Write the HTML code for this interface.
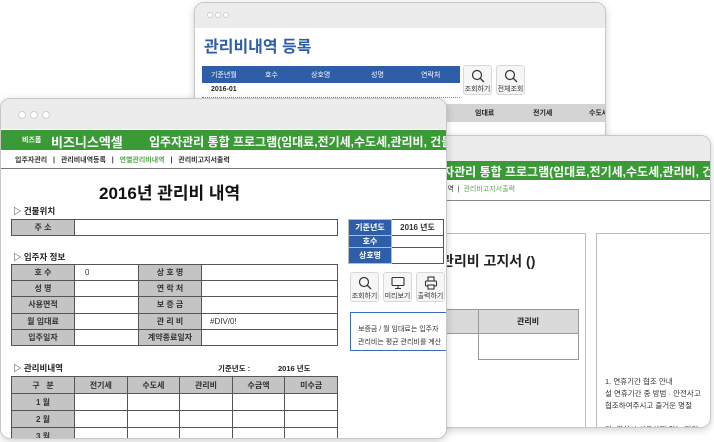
<!DOCTYPE html>
<html><head><meta charset="utf-8"><style>
*{margin:0;padding:0;box-sizing:border-box}
body{width:714px;height:442px;background:#fff;position:relative;overflow:hidden;font-family:"Liberation Sans","Noto Sans CJK KR",sans-serif;color:#222}
.a{position:absolute}
.win{position:absolute;background:#fff;border:1px solid #c8c8c8;border-radius:10px;overflow:hidden;box-shadow:0 2px 8px rgba(0,0,0,.18)}
.tb{position:absolute;left:0;right:0;top:0;background:#ececec}
.dot{position:absolute;width:8px;height:8px;border-radius:50%;background:#fff;border:1px solid #d0d0d0}
.green{position:absolute;background:#3a9a35;color:#fff;font-weight:bold;white-space:nowrap}
.t{position:absolute;white-space:nowrap}
table{border-collapse:collapse;position:absolute;font-size:8px;font-weight:bold}
td{border:1px solid #555;text-align:center;color:#333;padding:0}
td.g{background:#c4c4c4}
td.b{background:#2f5ea8;color:#fff;border-color:#bbb}
.btn{position:absolute;width:29px;height:30px;border:1px solid #d8d8d8;border-radius:3px;background:#f6f6f6;font-size:7px;text-align:center;color:#333}
.btn svg{display:block;margin:3px auto 1px}
</style></head><body>

<!-- back window -->
<div class="win" style="left:194px;top:2px;width:412px;height:140px">
 <div class="tb" style="height:25px"></div>
 <div class="dot" style="left:12px;top:9px;width:6px;height:6px"></div>
 <div class="dot" style="left:20px;top:9px;width:6px;height:6px"></div>
 <div class="dot" style="left:28px;top:9px;width:6px;height:6px"></div>
 <div class="t" style="left:9px;top:30px;font-size:16px;font-weight:bold;color:#2f5ea8">관리비내역 등록</div>
 <div class="a" style="left:7px;top:63px;width:258px;height:17px;background:#2f5ea8"></div>
 <div class="t" style="left:16px;top:67px;font-size:7px;color:#fff">기준년월</div>
 <div class="t" style="left:70px;top:67px;font-size:7px;color:#fff">호수</div>
 <div class="t" style="left:116px;top:67px;font-size:7px;color:#fff">상호명</div>
 <div class="t" style="left:176px;top:67px;font-size:7px;color:#fff">성명</div>
 <div class="t" style="left:226px;top:67px;font-size:7px;color:#fff">연락처</div>
 <div class="t" style="left:16px;top:83px;font-size:7px;font-weight:bold">2016-01</div>
 <div class="a" style="left:7px;top:94px;width:258px;border-top:1px dotted #888"></div>
 <div class="btn" style="left:268px;top:62px"><svg width="14" height="14" viewBox="0 0 14 14"><circle cx="6" cy="6" r="4.5" fill="none" stroke="#333" stroke-width="1.2"/><path d="M9.3 9.3L13 13" stroke="#333" stroke-width="1.3"/></svg>조회하기</div>
 <div class="btn" style="left:301px;top:62px"><svg width="14" height="14" viewBox="0 0 14 14"><circle cx="6" cy="6" r="4.5" fill="none" stroke="#333" stroke-width="1.2"/><path d="M9.3 9.3L13 13" stroke="#333" stroke-width="1.3"/></svg>전체조회</div>
 <div class="a" style="left:250px;top:101px;width:162px;height:18px;background:#d4d4d4"></div>
 <div class="t" style="left:280px;top:105px;font-size:7px;font-weight:bold">임대료</div>
 <div class="t" style="left:338px;top:105px;font-size:7px;font-weight:bold">전기세</div>
 <div class="t" style="left:394px;top:105px;font-size:7px;font-weight:bold">수도세</div>
</div>

<!-- third window -->
<div class="win" style="left:380px;top:135px;width:331px;height:293px">
 <div class="tb" style="height:25px"></div>
 <div class="green" style="left:0;right:0;top:25px;height:19px;font-size:12px;padding:2px 0 0 0;"><span style="position:absolute;left:40px;top:2px">입주자관리 통합 프로그램(임대료,전기세,수도세,관리비, 건물관리)</span></div>
 <div class="t" style="left:60px;top:48px;font-size:7px;color:#333">내역 &nbsp;|&nbsp; <span style="color:#5aa850">관리비고지서출력</span></div>
 <div class="a" style="left:0;right:0;top:64px;border-top:1px solid #888"></div>
 <div class="a" style="left:55px;top:97px;width:150px;height:195px;border:1px solid #bbb"></div>
 <div class="a" style="left:215px;top:97px;width:120px;height:195px;border:1px solid #bbb"></div>
 <div class="t" style="left:60px;top:115px;font-size:14px;font-weight:bold">관리비 고지서 ()</div>
 <div class="a" style="left:60px;top:173px;width:138px;height:25px;background:#dadada;border:1px solid #999"></div>
 <div class="a" style="left:97px;top:173px;width:101px;height:51px;border:1px solid #999"></div>
 <div class="t" style="left:136px;top:180px;font-size:8px;font-weight:bold">관리비</div>
 <div class="t" style="left:50px;top:265px;font-size:8px">11월</div>
 <div class="t" style="left:224px;top:240px;font-size:7.5px;line-height:12px;color:#333">1. 연휴기간 협조 안내<br>설 연휴기간 중 방범 · 안전사고<br>협조하여주시고 즐거운 명절<br><br>가. 퇴실시 사용하지 않는 전기</div>
</div>

<!-- front window -->
<div class="win" style="left:0;top:98px;width:447px;height:341px">
 <div class="tb" style="height:30px"></div>
 <div class="dot" style="left:17px;top:12px"></div>
 <div class="dot" style="left:29px;top:12px"></div>
 <div class="dot" style="left:41px;top:12px"></div>
 <div class="green" style="left:0;right:0;top:31px;height:20px">
  <span style="position:absolute;left:21px;top:5px;font-size:7px">비즈폼</span>
  <span style="position:absolute;left:50px;top:2px;font-size:13px">비즈니스엑셀</span>
  <span style="position:absolute;left:148px;top:3px;font-size:12px">입주자관리 통합 프로그램(임대료,전기세,수도세,관리비, 건물관리)</span>
 </div>
 <div class="t" style="left:14px;top:56px;font-size:7px;font-weight:bold;color:#333">입주자관리 &nbsp;&nbsp;|&nbsp;&nbsp; 관리비내역등록 &nbsp;&nbsp;|&nbsp;&nbsp; <span style="color:#5aa850">연별관리비내역</span> &nbsp;&nbsp;|&nbsp;&nbsp; 관리비고지서출력</div>
 <div class="a" style="left:0;right:0;top:69px;border-top:1px solid #777"></div>
 <div class="t" style="left:98px;top:80px;font-size:17px;font-weight:bold;color:#111">2016년 관리비 내역</div>
 <div class="t" style="left:12px;top:106px;font-size:8.5px;font-weight:bold">▷ 건물위치</div>
 <table style="left:10px;top:120px;width:327px;height:17px"><tr><td class="g" style="width:63px">주 소</td><td></td></tr></table>
 <table style="left:347px;top:120px;width:96px"><tr style="height:16px"><td class="b" style="width:43px">기준년도</td><td>2016 년도</td></tr><tr style="height:12px"><td class="b">호수</td><td></td></tr><tr style="height:16px"><td class="b">상호명</td><td></td></tr></table>
 <div class="t" style="left:12px;top:152px;font-size:8.5px;font-weight:bold">▷ 입주자 정보</div>
 <table style="left:10px;top:165px;width:327px;height:82px">
  <tr><td class="g" style="width:63px">호 수</td><td style="width:64px;text-align:left;padding-left:10px;font-weight:normal">0</td><td class="g" style="width:63px">상 호 명</td><td></td></tr>
  <tr><td class="g">성 명</td><td></td><td class="g">연 락 처</td><td></td></tr>
  <tr><td class="g">사용면적</td><td></td><td class="g">보 증 금</td><td></td></tr>
  <tr><td class="g">월 임대료</td><td></td><td class="g">관 리 비</td><td style="text-align:left;padding-left:8px;font-weight:normal">#DIV/0!</td></tr>
  <tr><td class="g">입주일자</td><td></td><td class="g">계약종료일자</td><td></td></tr>
 </table>
 <div class="btn" style="left:349px;top:173px"><svg width="14" height="14" viewBox="0 0 14 14"><circle cx="6" cy="6" r="4.5" fill="none" stroke="#333" stroke-width="1.2"/><path d="M9.3 9.3L13 13" stroke="#333" stroke-width="1.3"/></svg>조회하기</div>
 <div class="btn" style="left:382px;top:173px"><svg width="14" height="14" viewBox="0 0 14 14"><rect x="1" y="1.5" width="12" height="8" rx="1" fill="none" stroke="#333" stroke-width="1.1"/><path d="M7 9.5V12M4 12.5h6" stroke="#333" stroke-width="1.1"/></svg>미리보기</div>
 <div class="btn" style="left:415px;top:173px"><svg width="14" height="14" viewBox="0 0 14 14"><rect x="4" y="1" width="6" height="4" fill="none" stroke="#333" stroke-width="1.1"/><rect x="1.5" y="5" width="11" height="5" rx="1" fill="none" stroke="#333" stroke-width="1.1"/><rect x="4" y="9" width="6" height="4" fill="#fff" stroke="#333" stroke-width="1.1"/></svg>출력하기</div>
 <div class="a" style="left:349px;top:213px;width:110px;height:39px;border:1px solid #3a6cc0"></div>
 <div class="t" style="left:357px;top:224px;font-size:7px;line-height:13px;color:#333">보증금 / 월 임대료는 입주자<br>관리비는 평균 관리비를 계산</div>
 <div class="t" style="left:12px;top:263px;font-size:8.5px;font-weight:bold">▷ 관리비내역</div>
 <div class="t" style="left:217px;top:264px;font-size:7.5px;font-weight:bold">기준년도 :</div>
 <div class="t" style="left:277px;top:264px;font-size:7.5px;font-weight:bold">2016 년도</div>
 <table style="left:10px;top:277px;width:327px">
  <tr style="height:17px"><td class="g" style="width:63px">구 &nbsp; 분</td><td class="g">전기세</td><td class="g">수도세</td><td class="g">관리비</td><td class="g">수금액</td><td class="g">미수금</td></tr>
  <tr style="height:17px"><td class="g">1 월</td><td></td><td></td><td></td><td></td><td></td></tr>
  <tr style="height:17px"><td class="g">2 월</td><td></td><td></td><td></td><td></td><td></td></tr>
  <tr style="height:17px"><td class="g">3 월</td><td></td><td></td><td></td><td></td><td></td></tr>
 </table>
</div>
</body></html>
